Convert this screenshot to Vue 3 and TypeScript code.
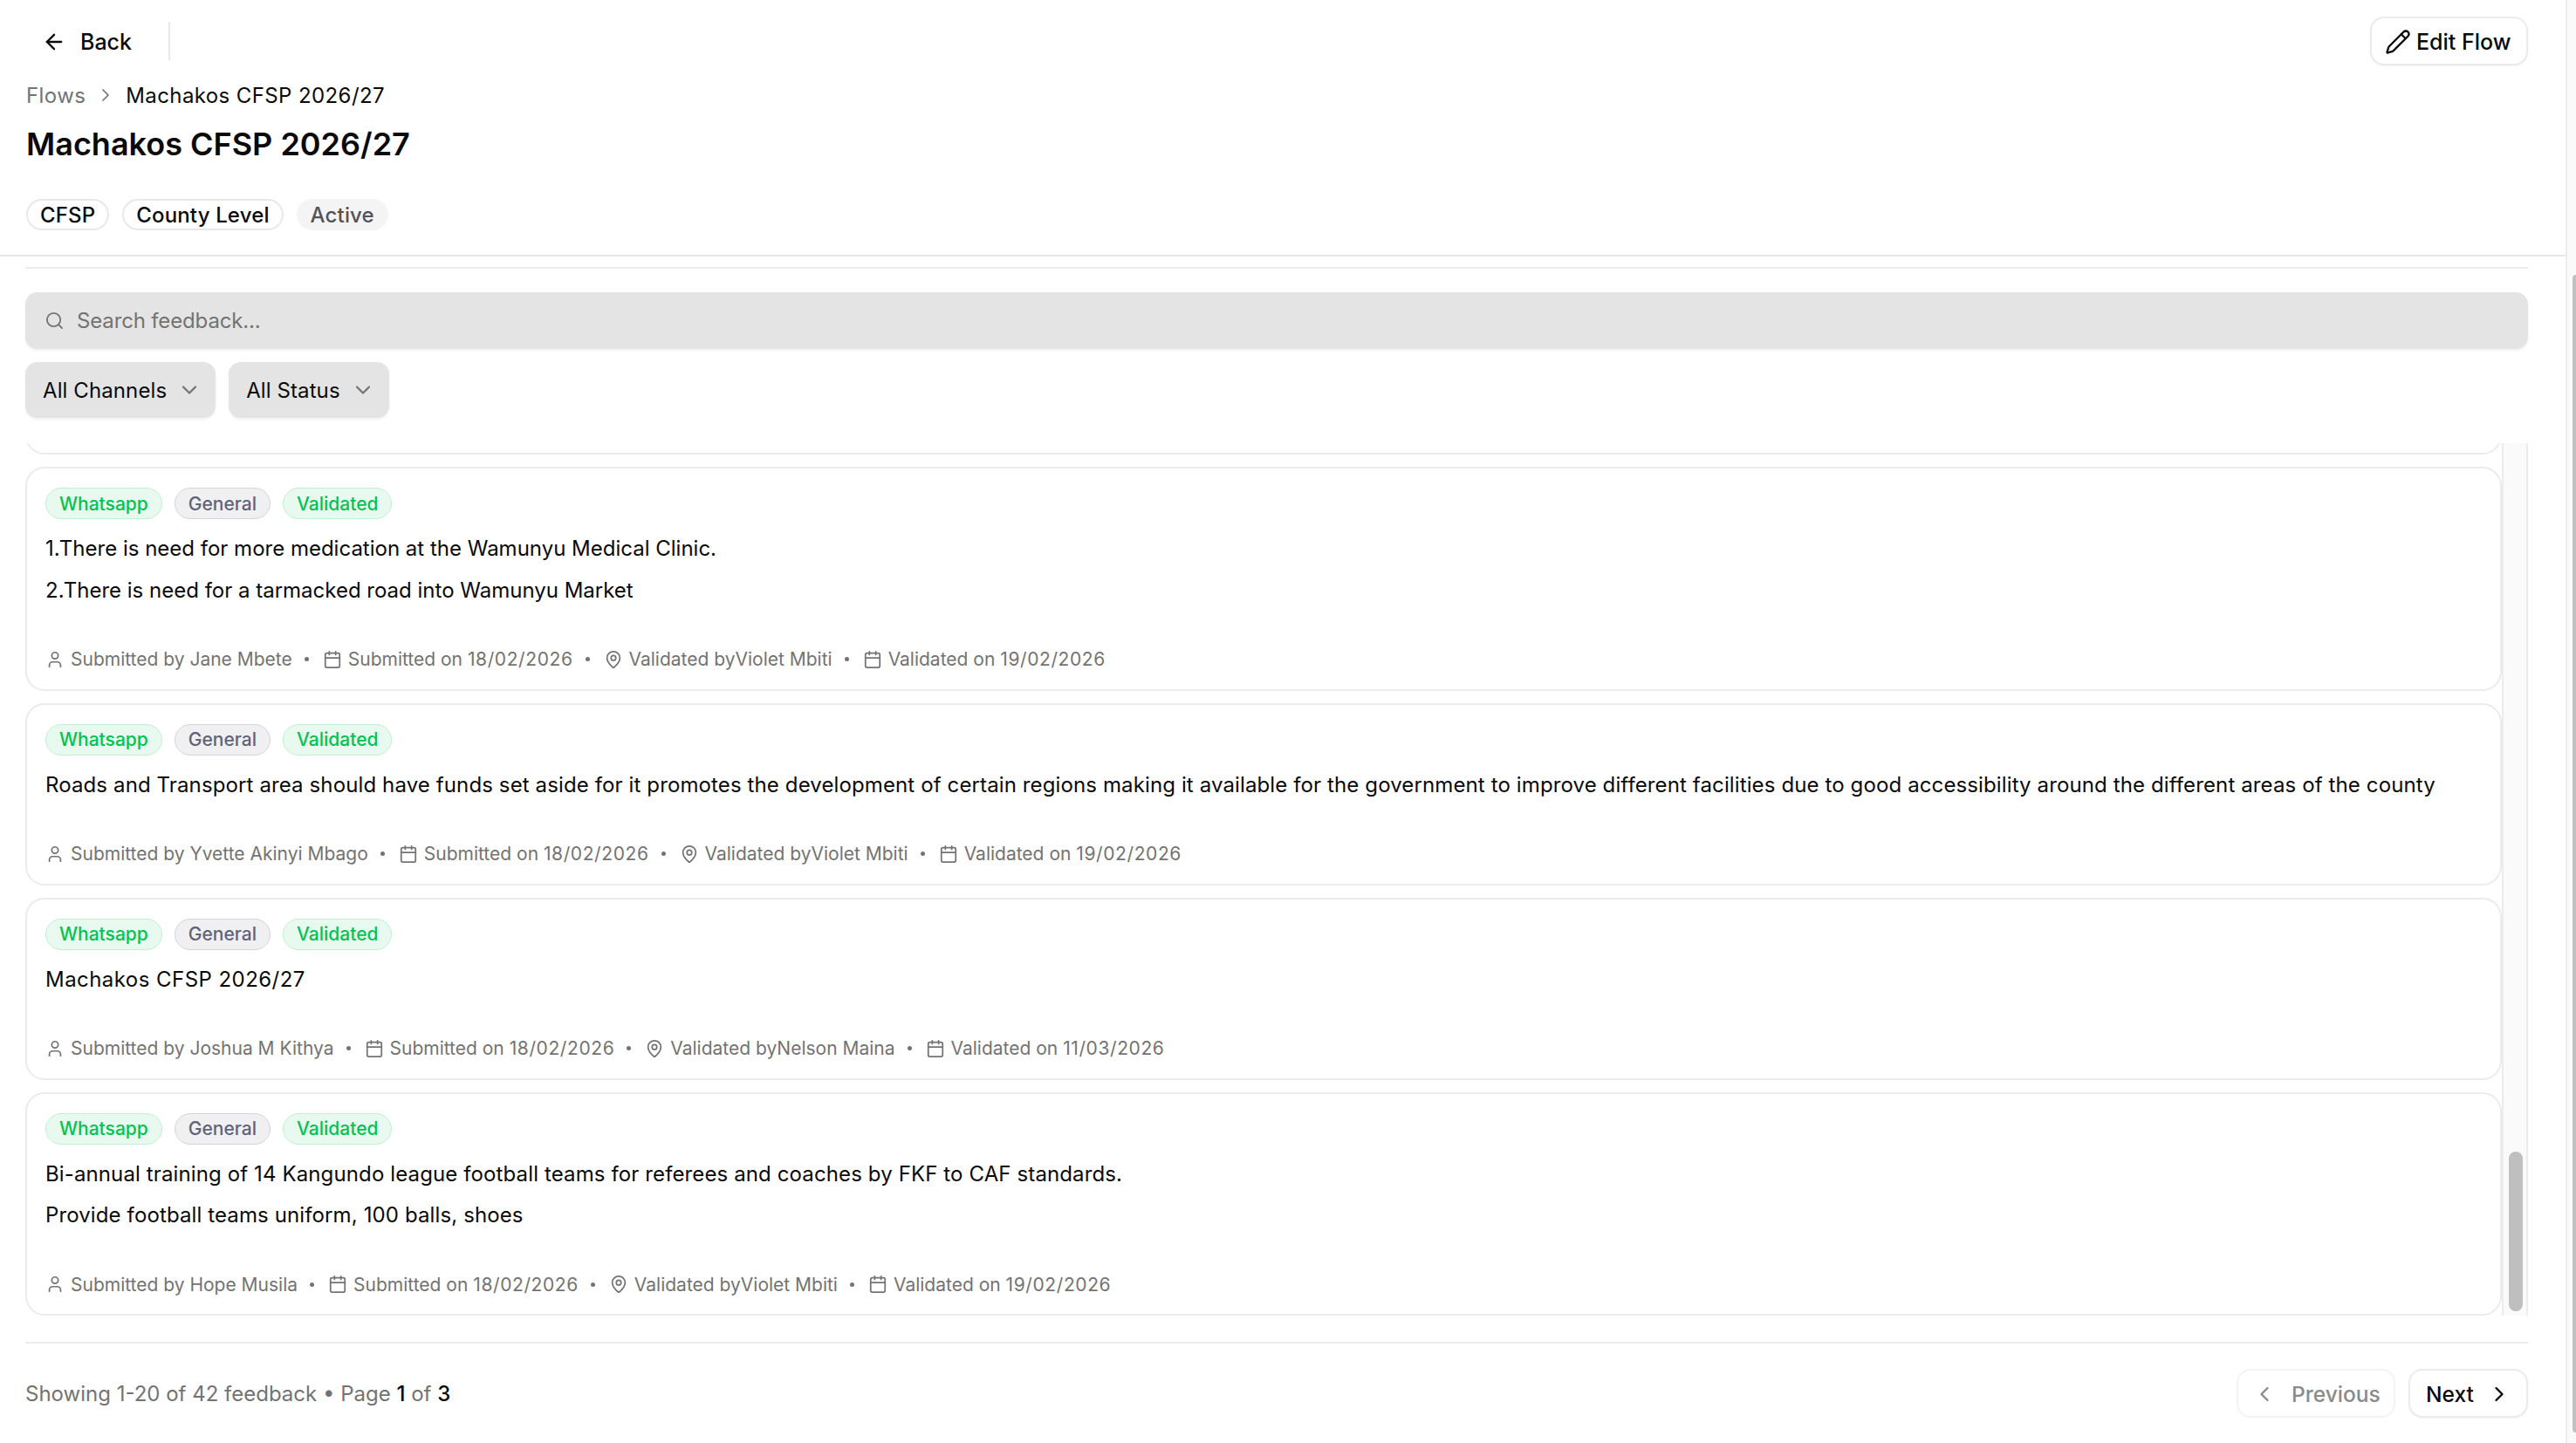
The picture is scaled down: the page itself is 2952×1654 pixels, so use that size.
<script setup lang="ts">
interface Item {
  lines: string[]
  by: string
  submitted: string
  validator: string
  validated: string
  spacing: string
}
const items: Item[] = [
  {
    lines: ['1.There is need for more medication at the Wamunyu Medical Clinic.', '2.There is need for a tarmacked road into Wamunyu Market'],
    by: 'Jane Mbete', submitted: '18/02/2026', validator: 'Violet Mbiti', validated: '19/02/2026', spacing: 'tight',
  },
  {
    lines: ['Roads and Transport area should have funds set aside for it promotes the development of certain regions making it available for the government to improve different facilities due to good accessibility around the different areas of the county'],
    by: 'Yvette Akinyi Mbago', submitted: '18/02/2026', validator: 'Violet Mbiti', validated: '19/02/2026', spacing: 'normal',
  },
  {
    lines: ['Machakos CFSP 2026/27'],
    by: 'Joshua M Kithya', submitted: '18/02/2026', validator: 'Nelson Maina', validated: '11/03/2026', spacing: 'wide',
  },
  {
    lines: ['Bi-annual training of 14 Kangundo league football teams for referees and coaches by FKF to CAF standards.', 'Provide football teams uniform, 100 balls, shoes'],
    by: 'Hope Musila', submitted: '18/02/2026', validator: 'Violet Mbiti', validated: '19/02/2026', spacing: 'normal',
  },
]
</script>

<template>
  <div class="page">
    <div class="main">
      <header class="header">
        <div class="toprow">
          <div class="backwrap">
            <button class="back">
              <svg class="ico-back" viewBox="0 0 24 24"><path d="m12 19-7-7 7-7" /><path d="M19 12H5" /></svg>
              <span>Back</span>
            </button>
            <span class="vline"></span>
          </div>
          <button class="btn edit">
            <svg class="ico-edit" viewBox="0 0 24 24"><path d="M21.174 6.812a1 1 0 0 0-3.986-3.987L3.842 16.174a2 2 0 0 0-.5.83l-1.321 4.352a.5.5 0 0 0 .623.622l4.353-1.32a2 2 0 0 0 .83-.497z" /><path d="m15 5 4 4" /></svg>
            <span>Edit Flow</span>
          </button>
        </div>
        <nav class="crumb">
          <span class="crumb-link">Flows</span>
          <svg class="ico-crumb" viewBox="0 0 24 24"><path d="m9 18 6-6-6-6" /></svg>
          <span>Machakos CFSP 2026/27</span>
        </nav>
        <h1 class="title">Machakos CFSP 2026/27</h1>
        <div class="head-tags">
          <span class="htag">CFSP</span>
          <span class="htag">County Level</span>
          <span class="htag htag-soft">Active</span>
        </div>
      </header>

      <section class="content">
        <div class="search">
          <svg class="ico-search" viewBox="0 0 24 24"><circle cx="11" cy="11" r="8" /><path d="m21 21-4.3-4.3" /></svg>
          <span>Search feedback...</span>
        </div>
        <div class="filters">
          <button class="select">
            <span>All Channels</span>
            <svg class="ico-down" viewBox="0 0 24 24"><path d="m6 9 6 6 6-6" /></svg>
          </button>
          <button class="select">
            <span>All Status</span>
            <svg class="ico-down" viewBox="0 0 24 24"><path d="m6 9 6 6 6-6" /></svg>
          </button>
        </div>

        <div class="listwrap">
          <div class="list">
            <div class="card card-clipped"></div>
            <article v-for="item in items" :key="item.by" class="card">
              <div class="tags">
                <span class="tag tag-green">Whatsapp</span>
                <span class="tag tag-gray">General</span>
                <span class="tag tag-green">Validated</span>
              </div>
              <div class="body" :class="item.spacing">
                <p v-for="line in item.lines" :key="line">{{ line }}</p>
              </div>
              <div class="meta">
                <span class="meta-item">
                  <svg class="ico-meta" viewBox="0 0 24 24"><path d="M19 21v-2a4 4 0 0 0-4-4H9a4 4 0 0 0-4 4v2" /><circle cx="12" cy="7" r="4" /></svg>
                  <span>Submitted by {{ item.by }}</span>
                </span>
                <span class="dot"></span>
                <span class="meta-item">
                  <svg class="ico-meta" viewBox="0 0 24 24"><path d="M8 2v4" /><path d="M16 2v4" /><rect width="18" height="18" x="3" y="4" rx="2" /><path d="M3 10h18" /></svg>
                  <span>Submitted on <span class="date">{{ item.submitted }}</span></span>
                </span>
                <span class="dot"></span>
                <span class="meta-item">
                  <svg class="ico-meta" viewBox="0 0 24 24"><path d="M20 10c0 4.993-5.539 10.193-7.399 11.799a1 1 0 0 1-1.202 0C9.539 20.193 4 14.993 4 10a8 8 0 0 1 16 0" /><circle cx="12" cy="10" r="3" /></svg>
                  <span>Validated by{{ item.validator }}</span>
                </span>
                <span class="dot"></span>
                <span class="meta-item">
                  <svg class="ico-meta" viewBox="0 0 24 24"><path d="M8 2v4" /><path d="M16 2v4" /><rect width="18" height="18" x="3" y="4" rx="2" /><path d="M3 10h18" /></svg>
                  <span>Validated on <span class="date">{{ item.validated }}</span></span>
                </span>
              </div>
            </article>
          </div>
          <div class="track"><div class="thumb"></div></div>
        </div>

        <footer class="footer">
          <div class="count">Showing 1-20 of 42 feedback • Page <b>1</b> of <b>3</b></div>
          <div class="pager">
            <button class="btn prev">
              <svg class="ico-page" viewBox="0 0 24 24"><path d="m15 18-6-6 6-6" /></svg>
              <span>Previous</span>
            </button>
            <button class="btn next">
              <span>Next</span>
              <svg class="ico-page" viewBox="0 0 24 24"><path d="m9 18 6-6-6-6" /></svg>
            </button>
          </div>
        </footer>
      </section>
    </div>
    <div class="pagebar"><div class="pagethumb"></div></div>
  </div>
</template>

<style>
html, body { margin: 0; background: #fff; overflow: hidden; }
</style>

<style scoped>
* { box-sizing: border-box; }
svg { fill: none; stroke: currentColor; stroke-linecap: round; stroke-linejoin: round; flex: none; display: block; }
button { font: inherit; color: inherit; background: none; border: 0; padding: 0; margin: 0; }
p { margin: 0; }

.page {
  display: flex;
  width: 2952px;
  height: 1654px;
  overflow: hidden;
  background: #fff;
  color: #0a0a0a;
  font-family: Inter, "Liberation Sans", sans-serif;
  font-size: 24px;
}
.main { flex: 1; min-width: 0; display: flex; flex-direction: column; }

.pagebar {
  width: 12px;
  background: #fafafa;
  border-left: 2px solid #ececec;
  padding: 315px 0 12px 6px;
  display: flex;
}
.pagethumb { flex: 1; background: #c1c1c1; border-radius: 4px 0 0 4px; }

.header {
  height: 294px;
  padding: 19px 43px 0 30px;
  border-bottom: 2px solid #e8e8e8;
}
.toprow { display: flex; justify-content: space-between; align-items: center; height: 56px; }
.backwrap { display: flex; align-items: center; }
.back { display: flex; align-items: center; gap: 16px; padding-left: 18px; font-weight: 500; font-size: 25px; padding-top: 2px; }
.ico-back { width: 28px; height: 28px; stroke-width: 2; }
.vline { width: 2px; height: 44px; background: #e8e8e8; margin-left: 42px; }

.btn {
  display: flex;
  align-items: center;
  height: 56px;
  padding-top: 1px;
  border: 2px solid #ebebeb;
  border-radius: 16px;
  background: #fff;
  box-shadow: 0 1px 2px rgba(0, 0, 0, 0.05);
  font-weight: 500;
  font-size: 25px;
}
.edit { width: 181px; padding-left: 15px; gap: 6px; }
.ico-edit { width: 30px; height: 30px; stroke-width: 1.9; }

.crumb { display: flex; align-items: center; height: 34px; margin-top: 17px; font-size: 24px; letter-spacing: 0.4px; }
.crumb-link { color: #737373; }
.ico-crumb { width: 24px; height: 24px; margin: 0 11px 0 11px; stroke-width: 1.75; color: #737373; }

.title { margin: 14px 0 0; font-size: 36px; line-height: 50px; font-weight: 600; }

.head-tags { display: flex; gap: 15px; margin-top: 38px; }
.htag {
  display: flex;
  align-items: center;
  height: 36px;
  padding: 0 14px;
  border: 2px solid #e8e8e8;
  border-radius: 18px;
  font-size: 24px;
  font-weight: 500;
  letter-spacing: 0.15px;
}
.htag-soft { background: #f4f4f5; border-color: #f4f4f5; color: #52525b; }

.content {
  flex: 1;
  min-height: 0;
  display: flex;
  flex-direction: column;
  padding: 0 43px 0 29px;
}
.content::before { content: ""; display: block; border-top: 2px solid #ededed; margin-top: 12px; }

.search {
  display: flex;
  align-items: center;
  height: 65px;
  margin-top: 27px;
  padding-left: 22px;
  gap: 14px;
  background: #e4e4e4;
  border-radius: 14px;
  color: #737373;
  box-shadow: 0 2px 3px rgba(0, 0, 0, 0.06);
  font-size: 24px;
  letter-spacing: -0.15px;
}
.ico-search { width: 23px; height: 23px; stroke-width: 1.9; }

.filters { display: flex; gap: 15px; margin-top: 15px; }
.select {
  display: flex;
  align-items: center;
  height: 64px;
  padding: 0 16px 0 20px;
  gap: 12px;
  background: #e4e4e4;
  border-radius: 14px;
  box-shadow: 0 2px 3px rgba(0, 0, 0, 0.06);
  font-size: 24px;
  letter-spacing: 0.1px;
}
.ico-down { width: 28px; height: 28px; stroke-width: 1.9; color: #737373; }

.listwrap { display: flex; height: 1000px; margin-top: 29px; }
.list {
  width: 2838px;
  height: 1000px;
  overflow: hidden;
  display: flex;
  flex-direction: column;
  justify-content: flex-end;
  gap: 14px;
}
.track {
  width: 30px;
  background: #fafafa;
  border-left: 2px solid #ececec;
  border-right: 2px solid #ececec;
  padding: 812px 0 5px 6px;
}
.thumb { width: 16px; height: 183px; background: #bfbfbf; border-radius: 8px; }

.card {
  flex: none;
  border: 2px solid #ebebeb;
  border-radius: 22px;
  padding: 22px 22px 19px 21px;
  background: #fff;
}
.card-clipped { height: 100px; }

.tags { display: flex; gap: 14px; }
.tag {
  display: flex;
  align-items: center;
  height: 36px;
  padding: 0 15px;
  border: 1.5px solid;
  border-radius: 18px;
  font-size: 21px;
  font-weight: 500;
}
.tag-green { background: #e8f9ef; border-color: #c0f0d2; color: #00c44f; }
.tag-gray { background: #f0f0f3; border-color: #d4d4d8; color: #5f6478; }

.body { margin-top: 16px; display: flex; flex-direction: column; gap: 11.5px; font-size: 24px; }
.body p { line-height: 36px; white-space: nowrap; }
.tight { letter-spacing: 0; }
.normal { letter-spacing: 0.12px; }
.wide { letter-spacing: 0.45px; }

.meta { display: flex; align-items: center; height: 30px; margin-top: 46px; color: #737373; font-size: 21px; }
.meta-item { display: flex; align-items: center; gap: 7px; white-space: pre; }
.date { letter-spacing: 0.6px; }
.ico-meta { width: 22px; height: 22px; stroke-width: 1.9; }
.dot { width: 5px; height: 5px; border-radius: 50%; background: #737373; margin: 0 16px 0 14px; }

.footer {
  display: flex;
  justify-content: space-between;
  align-items: center;
  margin-top: 30px;
  padding-top: 29px;
  border-top: 2px solid #ebebeb;
}
.count { color: #737373; font-size: 24px; padding-top: 1px; }
.count b { color: #0a0a0a; font-weight: 500; }
.pager { display: flex; gap: 15px; }
.prev { width: 182px; padding-left: 16px; gap: 17px; color: #8a8a8a; border-color: #f3f3f3; box-shadow: none; font-size: 24.5px; }
.next { width: 137px; padding-left: 18px; gap: 15px; font-size: 24.5px; }
.ico-page { width: 28px; height: 28px; stroke-width: 2; }
</style>
